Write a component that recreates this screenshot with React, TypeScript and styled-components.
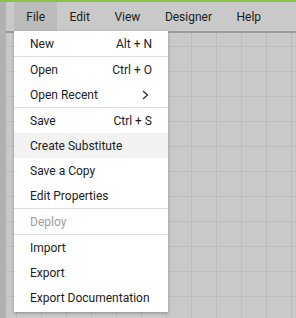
import React, { useState } from 'react';
import styled, { createGlobalStyle } from 'styled-components';

const GlobalStyle = createGlobalStyle`
  html, body {
    margin: 0;
    padding: 0;
    height: 100%;
    background: #c9c9c9;
    overflow: hidden;
  }
  #root {
    height: 100%;
  }
  * {
    box-sizing: border-box;
  }
`;

type Item = {
  label: string;
  shortcut?: string;
  submenu?: boolean;
  disabled?: boolean;
  divider?: boolean;
};

const fileMenu: Item[] = [
  { label: 'New', shortcut: 'Alt + N', divider: true },
  { label: 'Open', shortcut: 'Ctrl + O' },
  { label: 'Open Recent', submenu: true, divider: true },
  { label: 'Save', shortcut: 'Ctrl + S' },
  { label: 'Create Substitute' },
  { label: 'Save a Copy' },
  { label: 'Edit Properties', divider: true },
  { label: 'Deploy', disabled: true, divider: true },
  { label: 'Import' },
  { label: 'Export' },
  { label: 'Export Documentation' },
];

const menus = ['File', 'Edit', 'View', 'Designer', 'Help'];

const App = () => {
  const [open] = useState('File');
  const [hovered, setHovered] = useState('Create Substitute');

  return (
    <>
      <GlobalStyle />
      <Page>
        <AccentBar />
        <Body>
          <SideStrip />
          <Workspace>
            <MenuBar>
              {menus.map(m => (
                <MenuSlot key={m}>
                  <MenuTitle active={m === open}>{m}</MenuTitle>
                  {m === open && (
                    <Dropdown>
                      {fileMenu.map(it => (
                        <MenuRow
                          key={it.label}
                          divider={!!it.divider}
                          disabled={!!it.disabled}
                          highlighted={hovered === it.label}
                          onMouseEnter={() => !it.disabled && setHovered(it.label)}
                        >
                          <span>{it.label}</span>
                          {it.shortcut && <span>{it.shortcut}</span>}
                          {it.submenu && (
                            <Chevron width="7" height="10" viewBox="0 0 7 10">
                              <path d="M1 1 L5.5 5 L1 9" fill="none" stroke="#212121" strokeWidth="1.2" />
                            </Chevron>
                          )}
                        </MenuRow>
                      ))}
                    </Dropdown>
                  )}
                </MenuSlot>
              ))}
            </MenuBar>
            <Canvas />
          </Workspace>
        </Body>
      </Page>
    </>
  );
};

const Page = styled.div`
  display: flex;
  flex-direction: column;
  height: 100%;
  font-family: Roboto, 'Liberation Sans', sans-serif;
  color: #212121;
`;

const AccentBar = styled.div`
  height: 2px;
  background: #8bc34a;
`;

const Body = styled.div`
  flex: 1;
  display: flex;
`;

const SideStrip = styled.div`
  width: 6px;
  background: #b1b1b1;
`;

const Workspace = styled.div`
  flex: 1;
  display: flex;
  flex-direction: column;
`;

const MenuBar = styled.div`
  height: 31px;
  display: flex;
  padding-left: 8px;
  background: #c9c9c9;
  border-bottom: 2px solid #9c9c9c;
  font-size: 12px;
`;

const MenuSlot = styled.div`
  position: relative;
  display: flex;
`;

const MenuTitle = styled.div<{ active: boolean }>`
  display: flex;
  align-items: center;
  padding: 0 12.25px;
  background: ${p => (p.active ? '#bcbcbc' : 'transparent')};
`;

const Dropdown = styled.div`
  position: absolute;
  top: 29px;
  left: 0;
  width: 154px;
  padding-bottom: 2px;
  background: #fff;
  box-shadow: 0 1px 3px rgba(0, 0, 0, 0.3);
  z-index: 10;
`;

const MenuRow = styled.div<{ divider: boolean; disabled: boolean; highlighted: boolean }>`
  box-sizing: content-box;
  height: 25px;
  display: flex;
  align-items: center;
  justify-content: space-between;
  padding: 0 16px;
  font-size: 12px;
  color: ${p => (p.disabled ? '#9e9e9e' : '#212121')};
  background: ${p => (p.highlighted ? '#f2f2f2' : '#fff')};
  border-bottom: ${p => (p.divider ? '1px solid #e0e0e0' : 'none')};
  white-space: nowrap;
`;

const Chevron = styled.svg`
  margin-right: 3px;
`;

const Canvas = styled.div`
  flex: 1;
  background-color: #c9c9c9;
  background-image:
    linear-gradient(to right, #bdbdbd 1px, transparent 1px),
    linear-gradient(to bottom, #bdbdbd 1px, transparent 1px);
  background-size: 25px 25px;
  background-position: 10px 13px;
`;

export default App;
